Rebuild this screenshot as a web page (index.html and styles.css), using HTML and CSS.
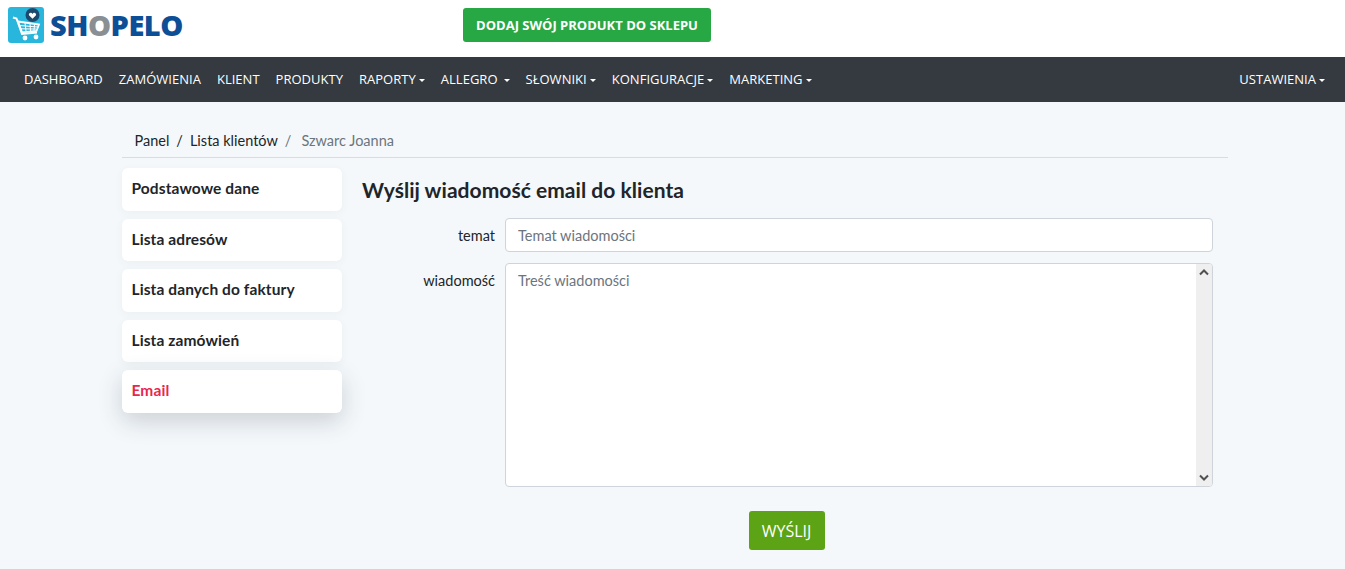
FILE: index.html
```html
<!DOCTYPE html>
<html lang="pl">
<head>
<meta charset="utf-8">
<title>Shopelo</title>
<link rel="stylesheet" href="styles.css">
</head>
<body>
<header class="top">
  <a class="logo" href="#">
    <svg class="logo-icon" width="36" height="36" viewBox="0 0 36 36" aria-hidden="true">
      <rect width="36" height="36" rx="3" fill="#29b6dc"/>
      <path d="M5 10.500l3.500 1 5.500 15.500 15-1.500" fill="none" stroke="#fff" stroke-width="2"/>
      <path d="M10 14.500l21 3-2.500 6.500-14.500 1.300z" fill="none" stroke="#fff" stroke-width="1.800"/>
      <path d="M11.500 18.500l18 1.500M12.500 21.800l15.500.2M17 16l1 8M22 16.500l.5 7.500M26.500 17.500l-.5 6" stroke="#fff" stroke-width="1"/>
      <circle cx="17" cy="31" r="2.400" fill="#fff"/>
      <circle cx="28" cy="30" r="2.400" fill="#fff"/>
      <circle cx="24.500" cy="8" r="7" fill="#1c4a6e"/>
      <path d="M24.500 11.800l-3.300-3.300c-1.500-1.700 1.900-4 3.300-1.600 1.400-2.400 4.800-.1 3.300 1.600z" fill="#fff"/>
    </svg>
    <span class="logo-text">SH<span class="logo-o">O</span>PELO</span>
  </a>
  <a class="add-btn" href="#">DODAJ SWÓJ PRODUKT DO SKLEPU</a>
</header>
<nav class="nav">
  <a href="#">DASHBOARD</a>
  <a href="#">ZAMÓWIENIA</a>
  <a href="#">KLIENT</a>
  <a href="#">PRODUKTY</a>
  <a class="drop" href="#">RAPORTY</a>
  <a class="drop wide" href="#">ALLEGRO</a>
  <a class="drop" href="#">SŁOWNIKI</a>
  <a class="drop" href="#">KONFIGURACJE</a>
  <a class="drop" href="#">MARKETING</a>
  <a class="drop end" href="#">USTAWIENIA</a>
</nav>
<div class="page">
  <ol class="crumbs">
    <li><a href="#">Panel</a></li>
    <li class="sep">/</li>
    <li><a href="#">Lista klientów</a></li>
    <li class="sep muted">/</li>
    <li class="muted current">Szwarc Joanna</li>
  </ol>
  <div class="columns">
    <aside class="side">
      <a class="card" href="#">Podstawowe dane</a>
      <a class="card" href="#">Lista adresów</a>
      <a class="card" href="#">Lista danych do faktury</a>
      <a class="card" href="#">Lista zamówień</a>
      <a class="card active" href="#">Email</a>
    </aside>
    <main class="main">
      <h1 class="title">Wyślij wiadomość email do klienta</h1>
      <form class="form">
        <label class="lbl" for="t">temat</label>
        <input class="field" id="t" placeholder="Temat wiadomości">
        <label class="lbl" for="m">wiadomość</label>
        <div class="area-wrap">
          <textarea class="field area" id="m" placeholder="Treść wiadomości"></textarea>
          <div class="scroll">
            <svg width="10" height="7" viewBox="0 0 10 7" aria-hidden="true"><path d="M1 5.500l4-4 4 4" fill="none" stroke="#505050" stroke-width="2"/></svg>
            <svg width="10" height="7" viewBox="0 0 10 7" aria-hidden="true"><path d="M1 1.500l4 4 4-4" fill="none" stroke="#505050" stroke-width="2"/></svg>
          </div>
        </div>
        <div class="actions"><button class="send" type="button">WYŚLIJ</button></div>
      </form>
    </main>
  </div>
</div>
</body>
</html>
```
FILE: styles.css
```css
* { box-sizing: border-box; }
html, body { margin: 0; padding: 0; }
body {
  height: 569px;
  overflow: hidden;
  background: #f4f8fb;
  font-family: "Open Sans", "Noto Sans", sans-serif;
  font-size: 14px;
  color: #212529;
}
a { text-decoration: none; color: inherit; }

.top {
  height: 57px;
  background: #fff;
  display: flex;
  align-items: flex-start;
  padding: 7px 0 0 8px;
}
.logo { display: flex; align-items: center; width: 455px; height: 36px; }
.logo-icon { flex: none; }
.logo-text {
  margin-left: 6px;
  font-size: 29px;
  font-weight: 800;
  letter-spacing: -.5px;
  color: #0d4f96;
  line-height: 36px;
}
.logo-o { color: #8a8f94; }
.add-btn {
  margin-top: 1px;
  width: 248px;
  height: 34px;
  background: #28a745;
  border-radius: 3px;
  color: #fff;
  font-size: 13px;
  font-weight: 700;
  display: flex;
  align-items: center;
  justify-content: center;
}

.nav {
  height: 45px;
  background: #343a40;
  display: flex;
  align-items: center;
  padding: 0 20px 2px 24px;
  gap: 16px;
  color: #fff;
  font-size: 13px;
  letter-spacing: .02px;
}
.drop::after {
  content: "";
  display: inline-block;
  margin-left: 3px;
  vertical-align: 2px;
  border-top: 3.500px solid #fff;
  border-left: 3.500px solid transparent;
  border-right: 3.500px solid transparent;
}
.wide::after { margin-left: 6px; }
.end { margin-left: auto; }

.page { width: 1106px; margin: 0 0 0 122px; }
.crumbs {
  list-style: none;
  margin: 0;
  padding: 0 0 8px 12.500px;
  height: 56px;
  display: flex;
  align-items: flex-end;
  border-bottom: 1px solid #d9dcdf;
  font-family: "Lato", sans-serif;
  font-size: 14.500px;
  color: #212529;
}
.sep { margin: 0 7px; }
.muted { color: #6c757d; }
.sep.muted { margin: 0 10px 0 7px; }

.columns { display: flex; align-items: flex-start; padding-top: 10px; }
.side { width: 220px; flex: none; display: flex; flex-direction: column; gap: 8px; }
.card {
  height: 42.500px;
  display: flex;
  align-items: center;
  padding: 0 0 2px 9.500px;
  background: #fff;
  border-radius: 6px;
  box-shadow: 0 2px 8px rgba(60, 70, 85, .05);
  font-family: "Lato", sans-serif;
  font-size: 15.500px;
  letter-spacing: .1px;
  font-weight: 700;
  color: #212529;
}
.active { color: #e8274b; box-shadow: 0 8px 24px rgba(40, 50, 60, .2); }

.main { width: 871px; margin-left: 20px; }
.title {
  margin: 9px 0 15px;
  font-family: "Lato", sans-serif;
  font-size: 21px;
  line-height: 26px;
  letter-spacing: .04px;
  font-weight: 700;
  color: #212529;
}
.form {
  display: grid;
  grid-template-columns: 133px 708px;
  column-gap: 10px;
  row-gap: 10px;
}
.lbl {
  text-align: right;
  font-family: "Lato", sans-serif;
  font-size: 14.500px;
  line-height: 35px;
}
.field {
  display: block;
  width: 100%;
  height: 34px;
  border: 1px solid #ced4da;
  border-radius: 4px;
  background: #fff;
  padding: 0 12px;
  font-family: "Lato", sans-serif;
  font-size: 14.500px;
  color: #495057;
  outline: none;
}
.field::placeholder { color: #6c757d; opacity: 1; }
.area-wrap { position: relative; height: 224px; }
.area { height: 224px; padding: 7px 28px 8px 12px; resize: none; overflow: hidden; line-height: 19px; }
.scroll {
  position: absolute;
  top: 1px;
  right: 1px;
  bottom: 1px;
  width: 16px;
  background: #efefef;
  border-radius: 0 3px 3px 0;
  display: flex;
  flex-direction: column;
  justify-content: space-between;
  align-items: center;
  padding: 5px 0;
}
.actions { grid-column: 1 / -1; display: flex; justify-content: center; padding: 14px 2px 0 0; }
.send {
  width: 76px;
  height: 39px;
  border: 0;
  border-radius: 3px;
  background: #5ca315;
  color: #fff;
  font-family: "Open Sans", sans-serif;
  font-size: 16px;
}
```
